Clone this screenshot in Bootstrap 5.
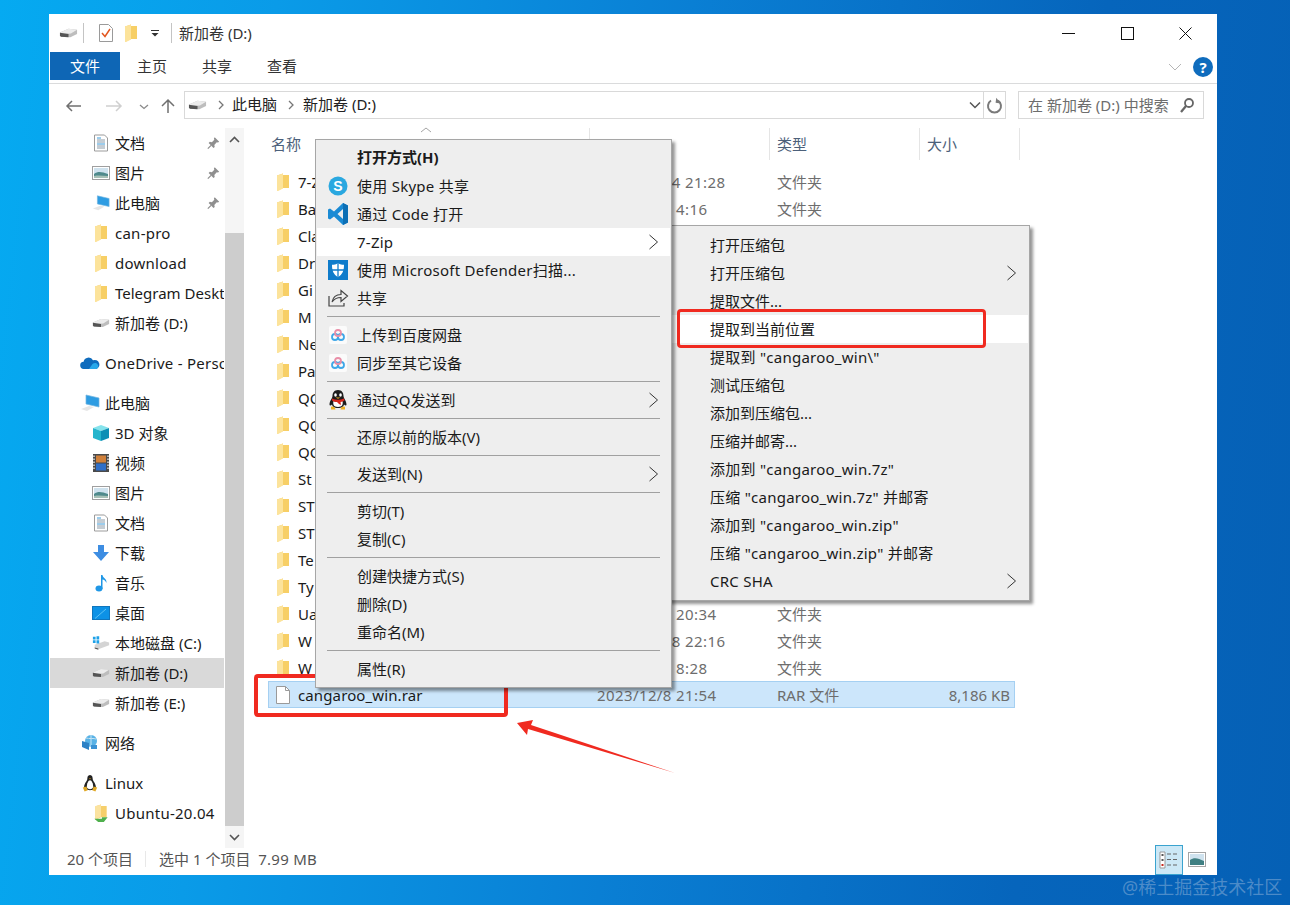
<!doctype html>
<html lang="zh-CN"><head><meta charset="utf-8"><title>新加卷 (D:)</title>
<link href="https://cdn.jsdelivr.net/npm/bootstrap@5.3.0/dist/css/bootstrap.min.css" rel="stylesheet">
<style>
html,body{margin:0;height:905px;overflow:hidden}
body{width:1290px;font:15px/20px "Noto Sans","Noto Sans CJK SC",sans-serif;color:#1a1a1a;
 background:linear-gradient(96deg,#05aaf1 0,#0a9be8 20%,#0a7fd4 50%,#0665bc 80%,#0560b5 100%);padding:14px 73px 30px 49px;position:relative}
.win{height:861px;background:#fff;display:flex;flex-direction:column}
.tbar{height:38px;padding-left:10px}
.tdiv{width:1px;height:20px;background:#c4c4c4}
.wctl{width:58.5px;display:flex;justify-content:center}
.rib{border-bottom:1px solid #dadbdc;height:32px;padding-left:1px;align-items:flex-start}
.ftab{width:70px;height:28px;background:#0e66b5;color:#fff;text-align:center;line-height:28px;margin-right:17px}
.rtab{width:65px;line-height:28px;color:#333}
.addr{height:44px;padding:7px 13px 9px 0;flex:none}
.nvb{width:135px;flex:none;position:relative}
.abox{width:822px;height:28px;border:1px solid #d9d9d9;padding-left:3px}
.atxt{padding-bottom:2px;color:#222}
.sbox{width:186px;height:28px;border:1px solid #d9d9d9;margin-left:12px;padding:0 9px;color:#6d6d6d}
.mainp{flex:1;min-height:0}
.navp{width:176px;flex:none;overflow:hidden;padding:0 1px}
.nr{height:30px;display:flex;align-items:center;white-space:nowrap;padding-left:42px;position:relative;overflow:hidden}
.nr>svg{width:18px;height:18px;flex:none;margin-right:5px}
.nr.l0{padding-left:30px;margin-top:10px}
.nr.l0>svg{width:20px;margin-right:5px}
.nr.cur{background:#d9d9d9}
.nr>svg.pinb{position:absolute;left:157px;top:8px;width:13px;height:14px;margin:0}
.la{letter-spacing:.25px}
.sbar{width:19px;flex:none;background:#f5f5f5;display:flex;flex-direction:column}
.sbtn{height:22px;display:flex;align-items:center;justify-content:center;flex:none}
.sgap{height:83px;flex:none}
.sthumb{flex:1;background:#cdcdcd}
.listp{flex:1;padding-left:19px;position:relative;min-width:0}
.lhead{display:flex;height:32px;color:#4c607a}
.lhead>div{padding-left:7px;line-height:32px;border-right:1px solid #e5e5e5}
.lhead>div:first-child{padding-left:8px}
.lbody{padding:8px 0 0 5px}
.fr{display:grid;grid-template-columns:30px 299px 180px 150px 88px;height:27px;align-items:center;white-space:nowrap;border:1px solid transparent;width:747px}
.fr>svg{margin-left:7px;width:14px;height:18px}
.fr>span:nth-child(n+3){color:#6d6d6d}
.fr>span{margin-left:-1px}
.fr>span.fdt{letter-spacing:.4px}
.fr.sel{background:#cce6fb;border-color:#a5d0f2}
.fsz{text-align:right;padding-right:6px}
.caret{position:absolute;left:176px;top:-1px;width:12px;height:6px}
.stat{height:27px;color:#555;padding-left:18px;padding-bottom:6px;position:relative;flex:none}
.sdiv{width:1px;height:16px;background:#e8e8e8;margin:0 13px 0 12px}
.vbtn{position:absolute;left:1106px;top:-3px;width:28px;height:30px;background:#cce8f6;border:1px solid #3aa3cf;display:flex;align-items:center;justify-content:center}
.vbtn2{position:absolute;left:1139px;top:4px;width:18px;height:15px}
.dropdown-menu.cm{position:absolute;margin:0;display:block;background:#eee;border:1px solid #a6a6a6;border-radius:0;min-width:0;box-shadow:3px 3px 3px rgba(0,0,0,.42);padding:3px 0 4px;font-size:15px;color:#1a1a1a}
#m1{left:315px;top:139px;width:357px;height:549px}
#m2{left:667px;top:225px;width:363px;height:376px;padding:5px 0;z-index:3}
.cm .dropdown-item{height:28px;padding:0 0 0 40px;display:flex;align-items:center;position:relative;color:#1a1a1a;font-size:15px;line-height:20px;margin-left:1px;width:calc(100% - 2px);white-space:nowrap}
.cm .dropdown-item.hi{background:#fff}
.cm .dropdown-item:first-child.bold{font-weight:700;height:29px;padding-bottom:2px}
.cm .dropdown-divider{margin:4px 11px;border-top:1px solid #a0a0a0;opacity:1}
.mic{position:absolute;left:10px;top:3px;width:22px;height:22px}
.mch{position:absolute;right:11px;top:6px;width:11px;height:16px}
#m2 .dropdown-item{padding-left:41px}
.redbox{position:absolute;border:3.5px solid #f02a20;border-radius:4px;z-index:5;pointer-events:none}
.rb1{left:677px;top:309px;width:309px;height:39px}
.rb2{left:254px;top:674px;width:254px;height:43px;border-width:4px}
.arrw{position:absolute;left:510px;top:715px;width:170px;height:65px;z-index:5}
.wm{position:absolute;left:1122px;top:876px;color:rgba(195,210,230,.38);font-size:18px;line-height:22px;white-space:nowrap}
</style></head><body>
<svg width="0" height="0" class="position-absolute"><defs>
<symbol id="i-folder" viewBox="0 0 14 18"><path d="M1 2.500 7 .5v1.500h6v13H7l-6 3z" fill="#f7cf66"/><path d="M1 2.500 7 .5v15l-6 3z" fill="#fce39b"/></symbol>
<symbol id="i-drive" viewBox="0 0 20 12"><path d="M1 5.500 10 1.500l9 1v4.500l-7 3.500-10-.5z" fill="#bdbdbd"/><path d="M1 5.500 10 1.500l9 1-6.500 4-8.500.5z" fill="#ececec"/><path d="M1 5.700 10 7v3.500L2 10l-1-1z" fill="#555"/></symbol>
<symbol id="i-doc" viewBox="0 0 18 18"><path d="M2.500 1h10l3 3v13h-13z" fill="#fff" stroke="#9b9b9b"/><path d="M5 4h4M5 10h8" stroke="#3a9ad9"/><path d="M5 6h8M5 8h8M5 12h8M5 14h8" stroke="#8a9aa8"/></symbol>
<symbol id="i-pic" viewBox="0 0 18 18"><rect x=".5" y="2.500" width="17" height="13" fill="#fff" stroke="#9f9f9f"/><rect x="2" y="4" width="14" height="10" fill="#cfe2ee"/><path d="M2 10c4-3 8-2 14 0v4H2z" fill="#4f8a8c"/><path d="M2 12c5-1 9 0 14 0v2H2z" fill="#a6c0b6"/></symbol>
<symbol id="i-pc" viewBox="0 0 20 18"><path d="M6 1l13 3v9L6 10z" fill="#2e9ce2" stroke="#72b5e0" stroke-width=".7"/><path d="M1 15l8-3 5 1-7 4z" fill="#e6e6e6"/></symbol>
<symbol id="i-cloud" viewBox="0 0 20 18"><path d="M4 15a3.600 3.600 0 0 1-.4-7.200A5 5 0 0 1 13 6.300 3.900 3.900 0 0 1 16.400 15z" fill="#0f6cbd"/><path d="M9 15l3.500-5c2-1.500 4-1 5 .2A3 3 0 0 1 16.500 15z" fill="#28a8ea"/></symbol>
<symbol id="i-3d" viewBox="0 0 18 18"><path d="M9 1l8 3-8 3-8-3z" fill="#86e3ec"/><path d="M1 4l8 3v10l-8-3z" fill="#25b5cd"/><path d="M17 4l-8 3v10l8-3z" fill="#0d8fb5"/></symbol>
<symbol id="i-video" viewBox="0 0 18 18"><rect x="1" y="0" width="16" height="18" fill="#4a4a4a"/><rect x="4" y="1.500" width="10" height="7" fill="#d0803a"/><rect x="4" y="9.500" width="10" height="7" fill="#2f6fc8"/><path d="M2 1.500v15M16 1.500v15" stroke="#ddd" stroke-width="1.500" stroke-dasharray="1.500 1.500"/></symbol>
<symbol id="i-down" viewBox="0 0 18 18"><path d="M6 1h6v7h5l-8 9-8-9h5z" fill="#3d8de2"/></symbol>
<symbol id="i-note" viewBox="0 0 18 18"><ellipse cx="7" cy="14.500" rx="3.500" ry="3" fill="#1f97e6"/><path d="M9 1h1.500c.3 3 4.500 3.500 4 8-.7-2-2.500-3.300-4-3.500V15H9z" fill="#1f97e6"/></symbol>
<symbol id="i-desk" viewBox="0 0 18 18"><rect x=".5" y="2.500" width="17" height="13" fill="#0d92e6" stroke="#1076bd"/><path d="M3 14.500 14 5" stroke="#5cc2f5"/></symbol>
<symbol id="i-cd" viewBox="0 0 20 18"><path d="M3 11l11-4 5 1.500v3L7 16l-4-1.500z" fill="#d4d4d4"/><path d="M3 14l4 1v1.500l-4-1.500z" fill="#4e4e4e"/><path d="M1 2h3v3H1zM5 1.500h3v3.500H5zM1 6h3v3H1zM5 6h3v3.500H5z" fill="#1ea1e8"/></symbol>
<symbol id="i-net" viewBox="0 0 20 18"><circle cx="11" cy="7" r="6" fill="#58b2e6"/><path d="M6 4c3 1 8 0 10 1M11 1v12" stroke="#c8e6f6"/><path d="M2 7l7 2v7l-7-3z" fill="#2d82c6"/><rect x="11" y="11" width="6" height="4" fill="#3b92d4"/></symbol>
<symbol id="i-linux" viewBox="0 0 20 20"><path d="M10 1c2.500 0 3 2.500 3 4.500 0 2 3.500 5 3.500 8.500 0 3-3 4-6.500 4S3.500 17 3.500 14C3.500 10.500 7 7.500 7 5.500S7.500 1 10 1z" fill="#222"/><path d="M10 7c2 0 3.500 4 3.500 7 0 2-1.500 3-3.500 3s-3.500-1-3.500-3c0-3 1.500-7 3.500-7z" fill="#fff"/><path d="M9 4.800h2l-1 1.400z" fill="#e8a91c"/><path d="M2 15l4-1 1.500 4-3.500 1.500zM18 15l-4-1-1.500 4 3.500 1.500z" fill="#e0a826"/></symbol>
<symbol id="i-ub" viewBox="0 0 16 19"><path d="M2 2.500 8 .5v1.500h6v12H8l-6 3z" fill="#f6cf6b"/><path d="M2 2.500 8 .5v13l-6 3z" fill="#fbe3a0"/><path d="M9 11v3H15l-4 5H5l-4-3.500h8z" fill="#4fb04d"/></symbol>
<symbol id="i-pin" viewBox="0 0 16 16"><path d="M9.500 1 15 6.500 13.500 7.500 12 7 9 10.500 9.500 13 8 14 2 8 3.500 6.500 6 7 9 4 8.500 2.500z" fill="#8f8f8f"/><path d="M5 11 1 15" stroke="#8f8f8f" stroke-width="1.500"/></symbol>
<symbol id="i-file" viewBox="0 0 14 18"><path d="M.5.500h9l4 4v13H.5z" fill="#fff" stroke="#9a9a9a"/><path d="M9.500.500v4h4" fill="none" stroke="#9a9a9a"/></symbol>
<symbol id="i-chv" viewBox="0 0 11 16"><path d="M1.500 1 9.500 8l-8 7" fill="none" stroke="#333" stroke-width="1"/></symbol>
<symbol id="i-small" viewBox="0 0 8 10"><path d="M2 1l4 4-4 4" fill="none" stroke="#777" stroke-width="1.300"/></symbol>
<symbol id="i-vs" viewBox="0 0 22 22"><path fill-rule="evenodd" d="M16 0 21 2.500v17L16 22 7 13.500 3 16.500 1 15.500v-9l2-1 4 3zM16 6l-5.500 5 5.500 5z" fill="#1a8ad4"/><path fill-rule="evenodd" d="M16 0 21 2.500v17L16 22zM16 6z" fill="#0c6fb5"/></symbol>
<symbol id="i-def" viewBox="0 0 22 22"><rect width="20" height="20" x="1" y="1" fill="#0f7ccb"/><path d="M11 4c2 1.500 4 1.800 6 1.800 0 6-1.500 9.500-6 12.500-4.500-3-6-6.500-6-12.500 2 0 4-.3 6-1.800z" fill="#fff"/><path d="M11 4v14M5 11h12" stroke="#0f7ccb" stroke-width="1.300"/></symbol>
<symbol id="i-share" viewBox="0 0 22 22"><path d="M2 9v10h15v-3" fill="none" stroke="#444" stroke-width="1.200"/><path d="M5 15c1-5 4-7.500 9-7.500V3.500L20.500 9 14 14.500v-4c-4 0-7 1.500-9 4.500z" fill="#eee" stroke="#444" stroke-width="1.200"/></symbol>
<symbol id="i-bd" viewBox="0 0 22 22"><rect x="2" y="2" width="18" height="18" rx="2" fill="#fbfbfb"/><circle cx="8" cy="13" r="3" fill="none" stroke="#3fa7e8" stroke-width="1.800"/><circle cx="14" cy="13" r="3" fill="none" stroke="#3fa7e8" stroke-width="1.800"/><circle cx="11" cy="9" r="3" fill="none" stroke="#e98fa8" stroke-width="1.800"/></symbol>
<symbol id="i-qq" viewBox="0 0 22 22"><path d="M11 1c4 0 5.500 3 5.500 6 0 2 3 5 3 8.500 0 1.500-1.500 1-2.500 0-.5 2-2 3.500-6 3.500s-5.500-1.500-6-3.500c-1 1-2.500 1.500-2.500 0C2.500 12 5.500 9 5.500 7c0-3 1.500-6 5.500-6z" fill="#1c1c1c"/><path d="M6.500 12c3 1 6 1 9 0 .7 3 0 6-4.500 6s-5.200-3-4.500-6z" fill="#fff"/><path d="M5 9.500c4 1.800 8 1.800 12 0l.5 2c-1.500 1-3 1.300-4 1.500l.5 3-2-1-2-2c-2 0-3.500-.5-5-1.500z" fill="#d8261c"/><ellipse cx="8.500" cy="6" rx="1.300" ry="1.800" fill="#fff"/><ellipse cx="13.500" cy="6" rx="1.300" ry="1.800" fill="#fff"/><path d="M8.500 8.500h5l-2.500 1.300z" fill="#f0b323"/><path d="M4 18c2-1 4 0 4.500 2.500H4zM18 18c-2-1-4 0-4.500 2.500H18z" fill="#f0b323"/></symbol>
</defs></svg>

<div class="win">
 <div class="tbar d-flex align-items-center flex-none">
  <svg width="19" height="12"><use href="#i-drive"/></svg>
  <span class="tdiv" style="margin-left:5px"></span>
  <svg style="margin-left:15px" width="14" height="18" viewBox="0 0 14 18"><path d="M.5.500h9l4 4v13H.5z" fill="#fff" stroke="#9a9a9a"/><path d="M3 9l3 3.500L11 5" fill="none" stroke="#e2561f" stroke-width="1.500"/></svg>
  <svg style="margin-left:11px" width="14" height="18"><use href="#i-folder"/></svg>
  <svg style="margin-left:13px" width="8" height="8" viewBox="0 0 8 8"><path d="M0 1h8v1H0zM.500 4h7L4 7.500z" fill="#333"/></svg>
  <span class="tdiv" style="margin-left:12px"></span>
  <span style="margin-left:7px;color:#333">新加卷 (D:)</span>
  <div class="ms-auto d-flex align-items-center" style="padding-right:2px">
   <div class="wctl"><svg width="13" height="13" viewBox="0 0 13 13"><path d="M0 6.500h13" stroke="#111"/></svg></div>
   <div class="wctl"><svg width="13" height="13" viewBox="0 0 13 13"><rect x=".5" y=".5" width="12" height="12" fill="none" stroke="#111"/></svg></div>
   <div class="wctl"><svg width="13" height="13" viewBox="0 0 13 13"><path d="M.5.500l12 12m0-12l-12 12" stroke="#111"/></svg></div>
  </div>
 </div>
 <div class="rib d-flex flex-none">
  <div class="ftab">文件</div><div class="rtab">主页</div><div class="rtab">共享</div><div class="rtab">查看</div>
  <div class="ms-auto d-flex align-items-center pe-1" style="height:30px">
   <svg width="14" height="8" viewBox="0 0 14 8"><path d="M1 1l6 6 6-6" fill="none" stroke="#b5b5b5"/></svg>
   <span class="d-flex align-items-center justify-content-center rounded-circle text-white fw-bold" style="width:20px;height:20px;background:#0f6cbd;margin-left:11px;font-size:15px">?</span>
  </div>
 </div>
 <div class="addr d-flex">
  <div class="nvb">
   <svg class="position-absolute" style="left:16px;top:7px" width="118" height="16" viewBox="0 0 118 16"><path d="M2 8h14M7 3 2 8l5 5" fill="none" stroke="#707070" stroke-width="1.500"/><path d="M41 8h15M51 3l5 5-5 5" fill="none" stroke="#cfcfcf" stroke-width="1.500"/><path d="M75 7l4 3.500L83 7" fill="none" stroke="#8a8a8a" stroke-width="1.300"/><path d="M103 15V2M97 8l6-6 6 6" fill="none" stroke="#707070" stroke-width="1.500"/></svg>
  </div>
  <div class="abox d-flex align-items-center">
   <svg width="19" height="12"><use href="#i-drive"/></svg>
   <svg style="margin-left:10px" width="8" height="10"><use href="#i-small"/></svg>
   <span class="atxt" style="margin-left:7px">此电脑</span>
   <svg style="margin-left:10px" width="8" height="10"><use href="#i-small"/></svg>
   <span class="atxt" style="margin-left:8px">新加卷 (D:)</span>
   <svg class="ms-auto" width="12" height="8" viewBox="0 0 12 8"><path d="M1 1.500l5 5 5-5" fill="none" stroke="#555" stroke-width="1.500"/></svg>
   <span style="width:1px;height:26px;background:#d9d9d9;margin-left:2px"></span>
   <svg style="margin:0 2px" width="17" height="17" viewBox="0 0 17 17"><path d="M5 3.500a6.500 6.500 0 1 0 7 0" fill="none" stroke="#7a7a7a" stroke-width="2"/><path d="M10 1v5h5z" fill="#7a7a7a" transform="rotate(8 12 3)"/></svg>
  </div>
  <div class="sbox d-flex align-items-center">
   <span>在 新加卷 (D:) 中搜索</span>
   <svg class="ms-auto" width="14" height="15" viewBox="0 0 14 15"><circle cx="9" cy="5" r="4" fill="none" stroke="#666" stroke-width="1.800"/><path d="M6 8l-5 6" stroke="#666" stroke-width="2.200"/></svg>
  </div>
 </div>
 <div class="mainp d-flex">
  <div class="navp">
   <div class="nr"><svg><use href="#i-doc"/></svg>文档<svg class="pinb"><use href="#i-pin"/></svg></div>
   <div class="nr"><svg><use href="#i-pic"/></svg>图片<svg class="pinb"><use href="#i-pin"/></svg></div>
   <div class="nr"><svg><use href="#i-pc"/></svg>此电脑<svg class="pinb"><use href="#i-pin"/></svg></div>
   <div class="nr la"><svg><use href="#i-folder"/></svg>can-pro</div>
   <div class="nr la"><svg><use href="#i-folder"/></svg>download</div>
   <div class="nr"><svg><use href="#i-folder"/></svg>Telegram Desktop</div>
   <div class="nr"><svg><use href="#i-drive"/></svg>新加卷 (D:)</div>
   <div class="nr l0 la"><svg><use href="#i-cloud"/></svg>OneDrive - Personal</div>
   <div class="nr l0"><svg><use href="#i-pc"/></svg>此电脑</div>
   <div class="nr"><svg><use href="#i-3d"/></svg>3D 对象</div>
   <div class="nr"><svg><use href="#i-video"/></svg>视频</div>
   <div class="nr"><svg><use href="#i-pic"/></svg>图片</div>
   <div class="nr"><svg><use href="#i-doc"/></svg>文档</div>
   <div class="nr"><svg><use href="#i-down"/></svg>下载</div>
   <div class="nr"><svg><use href="#i-note"/></svg>音乐</div>
   <div class="nr"><svg><use href="#i-desk"/></svg>桌面</div>
   <div class="nr"><svg><use href="#i-cd"/></svg>本地磁盘 (C:)</div>
   <div class="nr cur"><svg><use href="#i-drive"/></svg>新加卷 (D:)</div>
   <div class="nr"><svg><use href="#i-drive"/></svg>新加卷 (E:)</div>
   <div class="nr l0"><svg><use href="#i-net"/></svg>网络</div>
   <div class="nr l0"><svg><use href="#i-linux"/></svg>Linux</div>
   <div class="nr la"><svg><use href="#i-ub"/></svg>Ubuntu-20.04</div>
  </div>
  <div class="sbar">
   <div class="sbtn"><svg width="11" height="7" viewBox="0 0 11 7"><path d="M1 6l4.500-4.500L10 6" fill="none" stroke="#555" stroke-width="1.600"/></svg></div>
   <div class="sgap"></div><div class="sthumb"></div>
   <div class="sbtn"><svg width="11" height="7" viewBox="0 0 11 7"><path d="M1 1l4.500 4.500L10 1" fill="none" stroke="#555" stroke-width="1.600"/></svg></div>
  </div>
  <div class="listp">
   <div class="lhead">
    <div style="width:327px">名称</div><div style="width:180px"></div><div style="width:150px">类型</div><div style="width:100px">大小</div>
   </div>
   <svg class="caret" viewBox="0 0 12 6"><path d="M1 5l5-4 5 4" fill="none" stroke="#a5a5a5"/></svg>
   <div class="lbody">
    <div class="fr"><svg><use href="#i-folder"/></svg><span>7-Z</span><span class="fdt">2023/11/14 21:28</span><span>文件夹</span></div>
    <div class="fr"><svg><use href="#i-folder"/></svg><span>Ba</span><span class="fdt">2023/12/4 4:16</span><span>文件夹</span></div>
    <div class="fr"><svg><use href="#i-folder"/></svg><span>Cla</span></div>
    <div class="fr"><svg><use href="#i-folder"/></svg><span>Dr</span></div>
    <div class="fr"><svg><use href="#i-folder"/></svg><span>Gi</span></div>
    <div class="fr"><svg><use href="#i-folder"/></svg><span>M</span></div>
    <div class="fr"><svg><use href="#i-folder"/></svg><span>Ne</span></div>
    <div class="fr"><svg><use href="#i-folder"/></svg><span>Pa</span></div>
    <div class="fr"><svg><use href="#i-folder"/></svg><span>QC</span></div>
    <div class="fr"><svg><use href="#i-folder"/></svg><span>QC</span></div>
    <div class="fr"><svg><use href="#i-folder"/></svg><span>QC</span></div>
    <div class="fr"><svg><use href="#i-folder"/></svg><span>St</span></div>
    <div class="fr"><svg><use href="#i-folder"/></svg><span>ST</span></div>
    <div class="fr"><svg><use href="#i-folder"/></svg><span>ST</span></div>
    <div class="fr"><svg><use href="#i-folder"/></svg><span>Te</span></div>
    <div class="fr"><svg><use href="#i-folder"/></svg><span>Ty</span></div>
    <div class="fr"><svg><use href="#i-folder"/></svg><span>Ua</span><span class="fdt">2023/12/8 20:34</span><span>文件夹</span></div>
    <div class="fr"><svg><use href="#i-folder"/></svg><span>W</span><span class="fdt">2023/11/28 22:16</span><span>文件夹</span></div>
    <div class="fr"><svg><use href="#i-folder"/></svg><span>W</span><span class="fdt">2023/12/8 8:28</span><span>文件夹</span></div>
    <div class="fr sel"><svg><use href="#i-file"/></svg><span style="letter-spacing:.12px">cangaroo_win.rar</span><span class="fdt">2023/12/8 21:54</span><span>RAR 文件</span><span class="fsz">8,186 KB</span></div>
   </div>
  </div>
 </div>
 <div class="stat d-flex align-items-center">
  <span>20 个项目</span><span class="sdiv"></span><span>选中 1 个项目&nbsp; <span class="la">7.99 MB</span></span>
  <div class="vbtn"><svg width="20" height="18" viewBox="0 0 20 18"><path d="M1 1h5v16H1z" fill="#fff" stroke="#999"/><path d="M2.500 3h2v2h-2zM2.500 8h2v2h-2z" fill="#555"/><path d="M2.500 13h2v2h-2z" fill="#c8281e"/><path d="M8 3h4m2 0h4M8 8.500h4m2 0h4M8 14h4m2 0h4" stroke="#666"/></svg></div>
  <svg class="vbtn2" viewBox="0 0 18 15"><rect x=".5" y=".5" width="17" height="14" fill="#fff" stroke="#a5a5a5"/><rect x="2" y="2" width="14" height="11" fill="#cfe2ee"/><path d="M2 8c4-3 8-2 14 1v4H2z" fill="#3f7f82"/></svg>
 </div>
</div>

<div id="m1" class="dropdown-menu show cm">
 <div class="dropdown-item bold">打开方式(H)</div>
 <div class="dropdown-item la"><svg class="mic" viewBox="0 0 22 22"><circle cx="11" cy="11" r="9.500" fill="#2aa8e0"/><text x="11" y="16" text-anchor="middle" fill="#fff" font-size="14" font-weight="700" font-family="Liberation Sans">S</text></svg>使用 Skype 共享</div>
 <div class="dropdown-item la"><svg class="mic"><use href="#i-vs"/></svg>通过 Code 打开</div>
 <div class="dropdown-item hi la">7-Zip<svg class="mch"><use href="#i-chv"/></svg></div>
 <div class="dropdown-item la"><svg class="mic"><use href="#i-def"/></svg>使用 Microsoft Defender扫描...</div>
 <div class="dropdown-item"><svg class="mic"><use href="#i-share"/></svg>共享</div>
 <div class="dropdown-divider"></div>
 <div class="dropdown-item"><svg class="mic"><use href="#i-bd"/></svg>上传到百度网盘</div>
 <div class="dropdown-item"><svg class="mic"><use href="#i-bd"/></svg>同步至其它设备</div>
 <div class="dropdown-divider"></div>
 <div class="dropdown-item"><svg class="mic"><use href="#i-qq"/></svg>通过QQ发送到<svg class="mch"><use href="#i-chv"/></svg></div>
 <div class="dropdown-divider"></div>
 <div class="dropdown-item">还原以前的版本(V)</div>
 <div class="dropdown-divider"></div>
 <div class="dropdown-item">发送到(N)<svg class="mch"><use href="#i-chv"/></svg></div>
 <div class="dropdown-divider"></div>
 <div class="dropdown-item">剪切(T)</div>
 <div class="dropdown-item">复制(C)</div>
 <div class="dropdown-divider"></div>
 <div class="dropdown-item">创建快捷方式(S)</div>
 <div class="dropdown-item">删除(D)</div>
 <div class="dropdown-item">重命名(M)</div>
 <div class="dropdown-divider"></div>
 <div class="dropdown-item">属性(R)</div>
</div>
<div id="m2" class="dropdown-menu show cm">
 <div class="dropdown-item">打开压缩包</div>
 <div class="dropdown-item">打开压缩包<svg class="mch"><use href="#i-chv"/></svg></div>
 <div class="dropdown-item">提取文件...</div>
 <div class="dropdown-item hi">提取到当前位置</div>
 <div class="dropdown-item la">提取到 "cangaroo_win\"</div>
 <div class="dropdown-item">测试压缩包</div>
 <div class="dropdown-item">添加到压缩包...</div>
 <div class="dropdown-item">压缩并邮寄...</div>
 <div class="dropdown-item la">添加到 "cangaroo_win.7z"</div>
 <div class="dropdown-item la">压缩 "cangaroo_win.7z" 并邮寄</div>
 <div class="dropdown-item la">添加到 "cangaroo_win.zip"</div>
 <div class="dropdown-item la">压缩 "cangaroo_win.zip" 并邮寄</div>
 <div class="dropdown-item la">CRC SHA<svg class="mch"><use href="#i-chv"/></svg></div>
</div>
<div class="redbox rb1"></div>
<div class="redbox rb2"></div>
<svg class="arrw" viewBox="510 715 170 65"><path d="M517 723 533 720 531 725 675 773 528 729 527 735z" fill="#f02a20"/></svg>
<div class="wm">@稀土掘金技术社区</div>
</body></html>
